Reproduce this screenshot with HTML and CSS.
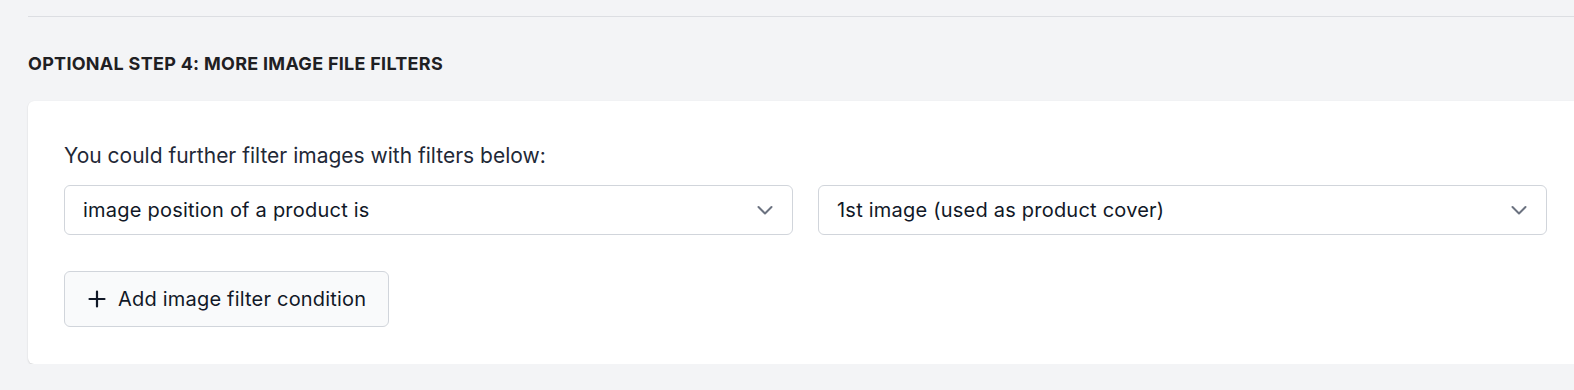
FILE: index.html
```html
<!DOCTYPE html>
<html>
<head>
<meta charset="utf-8">
<link rel="stylesheet" href="styles.css">
</head>
<body>
<div class="page">
  <div class="divider"></div>
  <h2 class="step-title">Optional step 4: More image file filters</h2>
  <div class="card">
    <p class="intro">You could further filter images with filters below:</p>
    <div class="row">
      <div class="select">
        <span>image position of a product is</span>
        <svg class="chev" width="16" height="16" viewBox="0 0 16 16"><path d="M1.5 5l6.5 6.5L14.5 5" fill="none" stroke="#6b7280" stroke-width="2" stroke-linecap="round" stroke-linejoin="round"/></svg>
      </div>
      <div class="select">
        <span>1st image (used as product cover)</span>
        <svg class="chev" width="16" height="16" viewBox="0 0 16 16"><path d="M1.5 5l6.5 6.5L14.5 5" fill="none" stroke="#6b7280" stroke-width="2" stroke-linecap="round" stroke-linejoin="round"/></svg>
      </div>
    </div>
    <button class="add-btn">
      <svg class="plus" width="18" height="18" viewBox="0 0 18 18"><path d="M9 1.5v15M1.5 9h15" stroke="#111827" stroke-width="2.2" stroke-linecap="round"/></svg>
      <span class="btn-label">Add image filter condition</span>
    </button>
  </div>
</div>
</body>
</html>
```

FILE: styles.css
```css
* { box-sizing: border-box; }
html, body {
  margin: 0;
  padding: 0;
  background: #f3f4f6;
  font-family: Inter, "Noto Sans", sans-serif;
  color: #111827;
  overflow: hidden;
}
.page {
  padding: 0 0 0 28px;
  width: 1620px;
}
.divider {
  height: 17px;
  border-bottom: 1px solid #dcdee2;
}
.step-title {
  margin: 35px 0 0 0;
  font-size: 18px;
  line-height: 24px;
  font-weight: 700;
  text-transform: uppercase;
  letter-spacing: 0.28px;
  color: #1f2023;
}
.card {
  margin-top: 25px;
  width: 1555px;
  background: #fff;
  border-radius: 6px;
  box-shadow: 0 1px 2px rgba(0,0,0,0.12), 0 0 1px rgba(0,0,0,0.06);
  padding: 41px 36px 37px 36px;
}
.intro {
  margin: 0;
  font-size: 21px;
  line-height: 28px;
  color: #1f2937;
}
.row {
  display: flex;
  gap: 25px;
  margin-top: 15px;
}
.select {
  flex: 0 0 729px;
  height: 50px;
  border: 1px solid #d1d5db;
  border-radius: 6px;
  display: flex;
  align-items: center;
  justify-content: space-between;
  padding: 0 19px 0 18px;
  font-size: 20px;
  letter-spacing: 0.22px;
  color: #111827;
}
.chev { display: block; }
.add-btn {
  margin-top: 36px;
  height: 56px;
  width: 325px;
  display: flex;
  align-items: center;
  gap: 12px;
  padding: 0 10px 0 23px;
  background: #f9fafb;
  border: 1px solid #d1d5db;
  border-radius: 6px;
  font-family: Inter, "Noto Sans", sans-serif;
  font-size: 20px;
  letter-spacing: 0.2px;
  color: #111827;
  white-space: nowrap;
}
.plus { flex: 0 0 auto; display: block; }
.btn-label { flex: 0 0 auto; }
```
